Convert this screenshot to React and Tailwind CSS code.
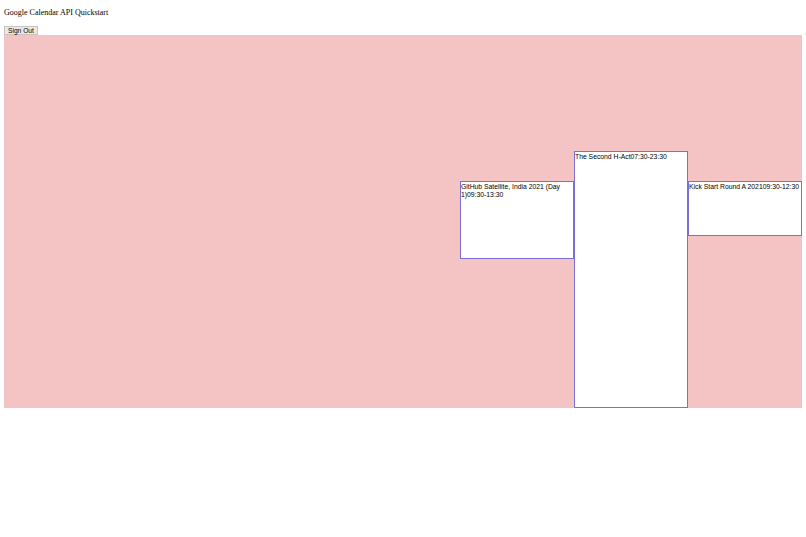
import React from "react";

const events = [
  { col: 4, top: 146, height: 78, title: "GitHub Satellite, India 2021 (Day 1)", time: "09:30-13:30" },
  { col: 5, top: 116, height: 257, title: "The Second H-Act", time: "07:30-23:30" },
  { col: 6, top: 146, height: 55, title: "Kick Start Round A 2021", time: "09:30-12:30" },
];

export default function App() {
  return (
    <div className="px-[4px] bg-white min-h-[537px]">
      <p className="mt-[8px] mb-[9px] text-[8px] leading-[9px] text-black" style={{ fontFamily: '"Liberation Serif", serif' }}>
        Google Calendar API Quickstart
      </p>
      <button
        className="block h-[9px] px-[3px] bg-[#e9e9e9] border border-[#c4c4c4] text-[6.67px] leading-[7px] text-black"
        style={{ fontFamily: '"Liberation Sans", Arial, sans-serif' }}
      >
        Sign Out
      </button>
      <div className="grid grid-cols-7 h-[373px] bg-[#f4c4c5]">
        {[0, 1, 2, 3, 4, 5, 6].map((c) => (
          <div key={c} className="relative">
            {events
              .filter((e) => e.col === c)
              .map((e) => (
                <div
                  key={e.title}
                  className="absolute left-0 right-0 bg-white border border-[#7b6fd6] pt-[1px] text-[6.8px] leading-[8px] text-black overflow-hidden"
                  style={{ top: e.top, height: e.height, fontFamily: '"Liberation Sans", Arial, sans-serif' }}
                >
                  {e.title}
                  {e.time}
                </div>
              ))}
          </div>
        ))}
      </div>
    </div>
  );
}
